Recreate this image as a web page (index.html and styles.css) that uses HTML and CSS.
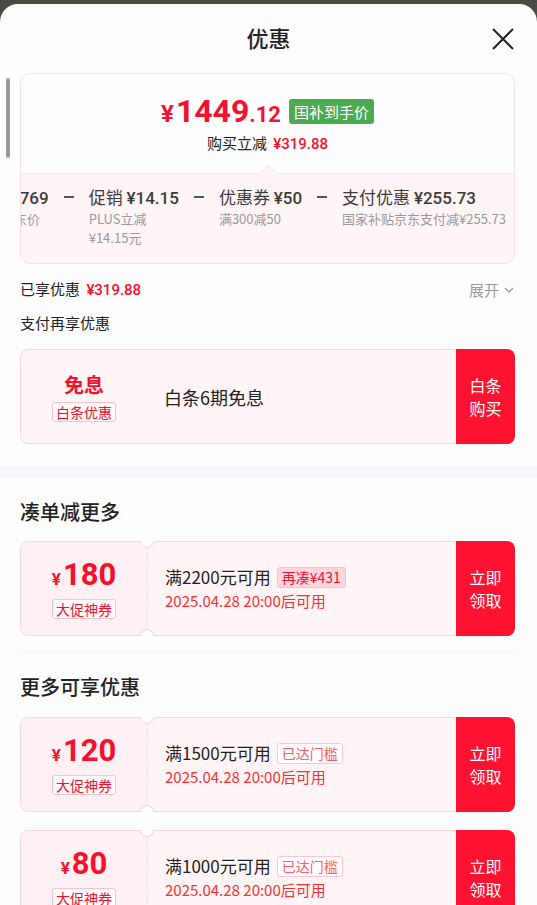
FILE: index.html
```html
<!DOCTYPE html>
<html>
<head>
    <meta charset="utf-8">
    <title>优惠</title>
    <link rel="stylesheet" href="styles.css">
</head>
<body>
<div class="sheet">
    <div class="scrollbar"></div>
    <div class="header">
        <span></span>
        <h1>优惠</h1>
        <button class="close" aria-label="关闭">
            <svg width="24" height="24" viewBox="0 0 24 24"><path d="M2 2 L22 22 M22 2 L2 22" stroke="#222" stroke-width="2" fill="none"/></svg>
        </button>
    </div>

    <div class="section">
        <div class="price-card">
            <div class="price-top">
                <div class="price-line">
                    <span class="price"><span class="yen">¥</span>1449<span class="dec">.12</span></span>
                    <span class="badge-green">国补到手价</span>
                </div>
                <div class="price-sub">购买立减 <span class="red">¥319.88</span></div>
            </div>
            <div class="price-bottom">
                <div class="breakdown">
                    <div class="item first">
                        <div class="main"><span class="num">¥1769</span></div>
                        <div class="sub">京东价</div>
                    </div>
                    <div class="minus"><i></i></div>
                    <div class="item">
                        <div class="main">促销 <span class="num">¥14.15</span></div>
                        <div class="sub">PLUS立减<br>¥14.15元</div>
                    </div>
                    <div class="minus"><i></i></div>
                    <div class="item">
                        <div class="main">优惠券 <span class="num">¥50</span></div>
                        <div class="sub">满300减50</div>
                    </div>
                    <div class="minus"><i></i></div>
                    <div class="item">
                        <div class="main">支付优惠 <span class="num">¥255.73</span></div>
                        <div class="sub">国家补贴京东支付减¥255.73</div>
                    </div>
                </div>
            </div>
        </div>

        <div class="enjoyed">
            <span>已享优惠 <span class="red">¥319.88</span></span>
            <span class="expand">展开
                <svg width="12" height="12" viewBox="0 0 12 12"><path d="M2 4 L6 8 L10 4" stroke="#999" stroke-width="1.4" fill="none"/></svg>
            </span>
        </div>
        <div class="label">支付再享优惠</div>

        <div class="coupon plain">
            <div class="stub">
                <div class="free">免息</div>
                <div class="tag">白条优惠</div>
            </div>
            <div class="body">
                <div class="title big">白条6期免息</div>
            </div>
            <div class="action">白条<br>购买</div>
        </div>
    </div>

    <div class="band"></div>

    <div class="section">
        <h2>凑单减更多</h2>
        <div class="coupon">
            <div class="stub">
                <div class="amount"><span class="cy">¥</span>180</div>
                <div class="tag">大促神券</div>
            </div>
            <div class="body">
                <div class="title">满2200元可用 <span class="chip fill">再凑¥431</span></div>
                <div class="date">2025.04.28 20:00后可用</div>
            </div>
            <div class="action">立即<br>领取</div>
        </div>
        <div class="divider"></div>

        <h2>更多可享优惠</h2>
        <div class="coupon">
            <div class="stub">
                <div class="amount"><span class="cy">¥</span>120</div>
                <div class="tag">大促神券</div>
            </div>
            <div class="body">
                <div class="title">满1500元可用 <span class="chip">已达门槛</span></div>
                <div class="date">2025.04.28 20:00后可用</div>
            </div>
            <div class="action">立即<br>领取</div>
        </div>
        <div class="coupon">
            <div class="stub">
                <div class="amount"><span class="cy">¥</span>80</div>
                <div class="tag">大促神券</div>
            </div>
            <div class="body">
                <div class="title">满1000元可用 <span class="chip">已达门槛</span></div>
                <div class="date">2025.04.28 20:00后可用</div>
            </div>
            <div class="action">立即<br>领取</div>
        </div>
    </div>
</div>
</body>
</html>
```

FILE: styles.css
```css
html, body { margin: 0; height: 100%; overflow: hidden; }
body { background: #4a4a45; font-family: "Noto Sans CJK SC", "Noto Sans", sans-serif; color: #222; }
.sheet { position: relative; margin-top: 4px; background: #fdfdfd; border-radius: 18px 18px 0 0; min-height: 100%; }
.scrollbar { position: absolute; left: 6px; top: 74px; width: 4px; height: 80px; border-radius: 2px; background: #9b9b9b; }
.header { height: 69px; display: grid; grid-template-columns: 1fr auto 1fr; align-items: center; }
.header h1 { margin: -4px 0 0; font-size: 22px; font-weight: 500; line-height: 30px; }
.close { justify-self: end; margin-right: 22px; padding: 0; border: 0; background: none; width: 24px; height: 24px; }
.close svg { display: block; }
.section { padding: 0 22px 0 20px; }
.red { color: #f5102d; }

.price-card { border: 1px solid #fcdde4; border-radius: 10px; overflow: hidden; }
.price-top { padding: 22px 0 17px; background: #fefefe; text-align: center; }
.price-line { height: 34px; display: flex; justify-content: center; align-items: center; gap: 8px; }
.price { font-family: Roboto, sans-serif; font-weight: 700; font-size: 32px; color: #f5102d; line-height: 34px; }
.price .yen { font-size: 24px; margin-right: 2px; }
.price .dec { font-size: 22px; }
.badge-green { background: #4caa50; color: #fff; font-size: 15px; line-height: 25px; padding: 0 5px; border-radius: 3px; margin-top: -4px; }
.price-sub { font-size: 15px; line-height: 24px; margin-top: 1px; }
.price-sub .red { font-family: Roboto, sans-serif; font-weight: 500; margin-left: 3px; }
.price-bottom { position: relative; background: #fff5f7; border-top: 1px solid #fde5ea; padding: 12px 0 16px; }
.price-bottom::before { content: ""; position: absolute; left: 241px; top: -7px; width: 12px; height: 12px; background: #fff5f7; border-left: 1px solid #fde5ea; border-top: 1px solid #fde5ea; transform: rotate(45deg); }
.breakdown { display: flex; gap: 15px; margin-left: -20px; white-space: nowrap; }
.item .main { font-size: 17px; line-height: 22px; color: #3c3c3c; }
.item .num { font-family: Roboto, sans-serif; font-weight: 500; }
.item .sub { font-size: 13px; line-height: 19px; color: #999; }
.minus { width: 10px; height: 22px; display: flex; align-items: center; }
.minus i { display: block; width: 10px; height: 2px; background: #555; }

.enjoyed { display: flex; justify-content: space-between; margin-top: 14px; font-size: 15px; line-height: 22px; }
.enjoyed .red { font-family: Roboto, sans-serif; font-weight: 500; margin-left: 3px; }
.expand { color: #999; display: flex; align-items: center; gap: 4px; }
.label { font-size: 15px; line-height: 22px; margin-top: 11px; }

.coupon { display: flex; height: 95px; margin-top: 15px; border: 1px solid #fdd3dc; border-radius: 8px; background: #fff5f7; box-sizing: border-box; }
.coupon + .coupon { margin-top: 18px; }
.stub { position: relative; width: 126px; flex: none; display: flex; flex-direction: column; align-items: center; justify-content: center; background: #fff0f3; border-right: 1px dashed #fcdbe2; border-radius: 8px 0 0 8px; }
.stub::before, .stub::after { content: ""; position: absolute; right: -7px; width: 12px; height: 6px; background: #fdfdfd; border: 1px solid #fdd3dc; }
.stub::before { top: -1px; border-top: 0; border-radius: 0 0 7px 7px; }
.stub::after { bottom: -1px; border-bottom: 0; border-radius: 7px 7px 0 0; }
.coupon.plain .stub { background: none; border-right: 0; }
.coupon.plain .stub::before, .coupon.plain .stub::after { display: none; }
.free { font-size: 20px; font-weight: 700; color: #f5102d; line-height: 28px; }
.amount { font-family: Roboto, sans-serif; font-weight: 700; font-size: 31px; line-height: 34px; color: #f5102d; }
.amount .cy { font-size: 17px; margin-right: 2px; }
.tag { margin-top: 3px; font-size: 14px; line-height: 18px; color: #f5102d; border: 1px solid #fcc2cc; border-radius: 3px; padding: 0 3px; background: #fffafb; }
.body { flex: 1; padding-left: 17px; display: flex; flex-direction: column; justify-content: center; }
.title { font-size: 17px; line-height: 24px; color: #222; display: flex; align-items: center; gap: 6px; }
.title.big { font-size: 18px; }
.date { font-size: 15px; line-height: 22px; color: #f5302e; margin-top: 1px; }
.chip { font-size: 14px; line-height: 19px; padding: 0 4px; border: 1px solid #fdc6cf; border-radius: 3px; color: #ff5a66; background: #fff; }
.chip.fill { background: #ffd6de; color: #f5102d; border-color: #fcbcc8; }
.action { width: 59px; flex: none; margin: -1px -1px -1px 0; background: #ff1131; color: #fff; border-radius: 0 8px 8px 0; font-size: 16px; line-height: 23px; display: flex; align-items: center; justify-content: center; text-align: center; }

.band { height: 12px; margin-top: 22px; background: #f6f7fb; }
h2 { margin: 20px 0 0; font-size: 20px; font-weight: 500; line-height: 28px; color: #222; }
.divider { height: 1px; background: #f2f2f2; margin-top: 16px; }
.divider + h2 { margin-top: 20px; }
.divider + h2 + .coupon { margin-top: 16px; }
```
